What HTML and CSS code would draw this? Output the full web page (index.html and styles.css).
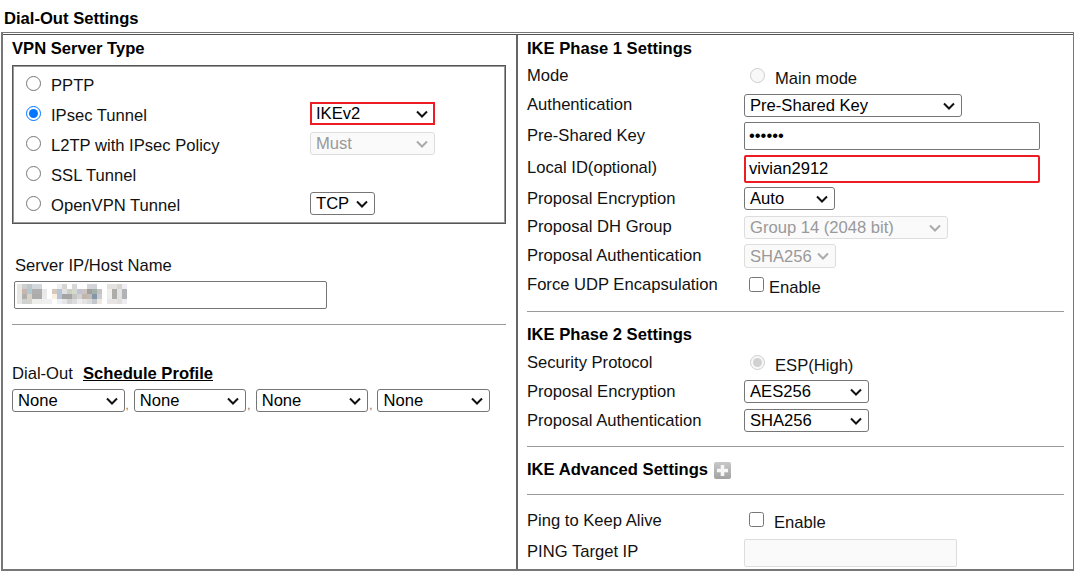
FILE: index.html
```html
<!DOCTYPE html>
<html lang="en">
<head>
<meta charset="utf-8">
<title>Dial-Out Settings</title>
<link rel="stylesheet" href="styles.css">
</head>
<body>
<h1 class="page-title">Dial-Out Settings</h1>
<div class="frame">
  <section class="panel left">
    <h2 class="section-title">VPN Server Type</h2>
    <div class="type-box">
      <label class="type-row"><input type="radio" name="type"><span>PPTP</span></label>
      <label class="type-row"><input type="radio" name="type" checked><span>IPsec Tunnel</span><select class="sel sel-ike flagged"><option>IKEv2</option></select></label>
      <label class="type-row"><input type="radio" name="type"><span>L2TP with IPsec Policy</span><select class="sel sel-ike" disabled><option>Must</option></select></label>
      <label class="type-row"><input type="radio" name="type"><span>SSL Tunnel</span></label>
      <label class="type-row"><input type="radio" name="type"><span>OpenVPN Tunnel</span><select class="sel sel-tcp"><option>TCP</option></select></label>
    </div>
    <div class="server">
      <div class="server-label">Server IP/Host Name</div>
      <div class="text-field server-field">
        <svg class="mosaic" width="110" height="20" viewBox="0 0 22 4" aria-hidden="true" shape-rendering="crispEdges">
          <rect x="0" y="0" width="1" height="4" fill="#e6e6e2"/>
          <rect x="1" y="0" width="1" height="1" fill="#cfcfcf"/><rect x="2" y="0" width="1" height="1" fill="#c0c6ca"/><rect x="3" y="0" width="2" height="1" fill="#d2d8dc"/>
          <rect x="1" y="1" width="1" height="1" fill="#c9b4ae"/><rect x="2" y="1" width="1" height="1" fill="#b0c8d0"/><rect x="3" y="1" width="2" height="1" fill="#aeaeae"/><rect x="5" y="1" width="1" height="1" fill="#e8e8e8"/>
          <rect x="1" y="2" width="1" height="1" fill="#b0b0ac"/><rect x="2" y="2" width="1" height="1" fill="#dad2c4"/><rect x="3" y="2" width="2" height="1" fill="#acacac"/><rect x="5" y="2" width="1" height="1" fill="#eaeaea"/>
          <rect x="1" y="3" width="1" height="1" fill="#d0d0ce"/><rect x="2" y="3" width="1" height="1" fill="#d2d2ce"/><rect x="3" y="3" width="2" height="1" fill="#eeeeea"/><rect x="5" y="3" width="2" height="1" fill="#f0f0f0"/>
          <rect x="7" y="1" width="1" height="1" fill="#d6c8ba"/><rect x="8" y="0" width="1" height="1" fill="#f0f0f4"/><rect x="9" y="0" width="1" height="1" fill="#d8d4d2"/><rect x="11" y="0" width="1" height="1" fill="#d8d8d8"/>
          <rect x="8" y="1" width="1" height="2" fill="#b6c2d6"/><rect x="9" y="1" width="1" height="1" fill="#e0e0e0"/><rect x="10" y="1" width="1" height="1" fill="#cecec4"/><rect x="11" y="1" width="1" height="1" fill="#d2dacc"/><rect x="12" y="1" width="1" height="1" fill="#c0c0d8"/><rect x="13" y="1" width="1" height="1" fill="#ccc4c0"/>
          <rect x="7" y="2" width="1" height="1" fill="#fbeee0"/><rect x="9" y="2" width="2" height="1" fill="#a4a4a4"/><rect x="11" y="2" width="1" height="1" fill="#c4c4c0"/><rect x="12" y="2" width="1" height="1" fill="#d2d2d2"/><rect x="13" y="2" width="1" height="1" fill="#c0b6ae"/>
          <rect x="8" y="3" width="1" height="1" fill="#eef0f6"/><rect x="9" y="3" width="1" height="1" fill="#e6e6e6"/><rect x="10" y="3" width="1" height="1" fill="#d2d2d2"/><rect x="11" y="3" width="1" height="1" fill="#dcdcdc"/><rect x="12" y="3" width="1" height="1" fill="#eeeeee"/><rect x="13" y="3" width="1" height="1" fill="#e4e4e4"/>
          <rect x="14" y="0" width="1" height="1" fill="#d6d6d6"/><rect x="15" y="0" width="1" height="1" fill="#d0d4d8"/>
          <rect x="14" y="1" width="1" height="1" fill="#a0a0a0"/><rect x="15" y="1" width="1" height="1" fill="#a2aeaa"/><rect x="16" y="1" width="1" height="1" fill="#c4c4c4"/>
          <rect x="14" y="2" width="1" height="1" fill="#c0bcb4"/><rect x="15" y="2" width="1" height="1" fill="#8496aa"/><rect x="16" y="2" width="1" height="1" fill="#cccccc"/>
          <rect x="14" y="3" width="1" height="1" fill="#dcdcdc"/><rect x="15" y="3" width="1" height="1" fill="#c4c8cc"/><rect x="16" y="3" width="1" height="1" fill="#f0e8e0"/>
          <rect x="18" y="0" width="2" height="1" fill="#e4e2de"/><rect x="20" y="0" width="1" height="1" fill="#d8d4d0"/><rect x="21" y="0" width="1" height="1" fill="#eeeef4"/>
          <rect x="18" y="1" width="1" height="2" fill="#eeeeea"/><rect x="19" y="1" width="1" height="2" fill="#acacA8"/><rect x="20" y="1" width="1" height="2" fill="#e2e2e2"/><rect x="21" y="1" width="1" height="2" fill="#b0b2b6"/>
          <rect x="18" y="3" width="2" height="1" fill="#e8e6e4"/><rect x="20" y="3" width="1" height="1" fill="#e2dedc"/><rect x="21" y="3" width="1" height="1" fill="#eeeef2"/>
        </svg>
      </div>
    </div>
    <hr class="rule">
    <div class="schedule-title">Dial-Out <a class="schedule-link" href="#">Schedule Profile</a></div>
    <div class="schedule-row">
      <select class="sel sel-none"><option>None</option></select><span class="comma">,</span>
      <select class="sel sel-none"><option>None</option></select><span class="comma">,</span>
      <select class="sel sel-none"><option>None</option></select><span class="comma">,</span>
      <select class="sel sel-none"><option>None</option></select>
    </div>
  </section>
  <section class="panel right">
    <h2 class="section-title">IKE Phase 1 Settings</h2>
    <div class="form phase1">
      <div class="label">Mode</div>
      <div class="control low"><input class="radio-gap" type="radio" disabled><span>Main mode</span></div>
      <div class="label raise">Authentication</div>
      <div class="control"><select class="sel sel-auth"><option>Pre-Shared Key</option></select></div>
      <div class="label">Pre-Shared Key</div>
      <div class="control"><div class="text-field key-field">••••••</div></div>
      <div class="label raise">Local ID(optional)</div>
      <div class="control"><div class="text-field key-field flagged">vivian2912</div></div>
      <div class="label">Proposal Encryption</div>
      <div class="control"><select class="sel sel-auto"><option>Auto</option></select></div>
      <div class="label raise">Proposal DH Group</div>
      <div class="control"><select class="sel sel-dh" disabled><option>Group 14 (2048 bit)</option></select></div>
      <div class="label">Proposal Authentication</div>
      <div class="control"><select class="sel sel-sha" disabled><option>SHA256</option></select></div>
      <div class="label">Force UDP Encapsulation</div>
      <div class="control low"><input class="check-gap" type="checkbox"><span>Enable</span></div>
    </div>
    <hr class="rule rule-p1">
    <h2 class="section-title title-p2">IKE Phase 2 Settings</h2>
    <div class="form phase2">
      <div class="label">Security Protocol</div>
      <div class="control low"><input class="radio-gap" type="radio" checked disabled><span>ESP(High)</span></div>
      <div class="label">Proposal Encryption</div>
      <div class="control"><select class="sel sel-p2"><option>AES256</option></select></div>
      <div class="label">Proposal Authentication</div>
      <div class="control"><select class="sel sel-p2"><option>SHA256</option></select></div>
    </div>
    <hr class="rule rule-p2">
    <h2 class="section-title title-adv">IKE Advanced Settings
      <svg class="plus" width="17" height="17" viewBox="0 0 17 17" aria-hidden="true">
        <defs>
          <linearGradient id="plusbg" x1="0" y1="0" x2="0" y2="1"><stop offset="0" stop-color="#c8c8c8"/><stop offset="1" stop-color="#a2a2a2"/></linearGradient>
          <filter id="plussoft" x="-20%" y="-20%" width="140%" height="140%"><feGaussianBlur stdDeviation="0.7"/></filter>
        </defs>
        <rect x="0" y="0" width="17" height="17" rx="2" fill="url(#plusbg)"/>
        <path d="M8.5 3v11M3 8.5h11" stroke="#f6f6f6" stroke-width="3.5" filter="url(#plussoft)"/>
      </svg>
    </h2>
    <hr class="rule rule-adv">
    <div class="form ping">
      <div class="label">Ping to Keep Alive</div>
      <div class="control low"><input class="check-gap wide" type="checkbox"><span>Enable</span></div>
      <div class="label raise">PING Target IP</div>
      <div class="control"><div class="text-field ping-field"></div></div>
    </div>
  </section>
</div>
</body>
</html>
```
FILE: styles.css
```css
* { box-sizing: border-box; }
html, body { margin: 0; padding: 0; height: 571px; overflow: hidden; background: #fff; }
body { font-family: "Liberation Sans", Arial, sans-serif; font-size: 16.6px; color: #111; }

.page-title { margin: 0; height: 32px; padding: 10px 0 0 4px; font-size: 16.6px; line-height: 17px; font-weight: bold; color: #000; }

.frame {
  height: 539px; margin-left: 1px;
  display: grid; grid-template-columns: 513px 1fr;
  border-top: 1px solid #777; border-left: 2px solid #777; border-right: 1px solid #777; border-bottom: 2px solid #777;
}
.panel { min-width: 0; margin-top: 1px; border-top: 1px solid #555; }
.left { padding-left: 9px; padding-right: 10px; }
.right { padding-left: 9px; padding-right: 9px; border-left: 2px solid #666; }

.section-title { margin: 0; font-size: 16.6px; line-height: 24px; height: 27px; padding-top: 2px; font-weight: bold; color: #000; }

.type-box {
  height: 159px; width: 494px; padding: 4px 0 0 13px; margin-top: 3px;
  border: 1px solid #555; outline: 1px solid #999; outline-offset: -2px;
}
.type-row { display: flex; align-items: center; height: 30px; }
.type-row input { margin: 0 10px 4px 0; width: 15px; height: 15px; flex: none; }
.type-row span { width: 259px; flex: none; padding-top: 2px; }

.sel {
  appearance: none; -webkit-appearance: none;
  font: 16.6px "Liberation Sans", Arial, sans-serif; height: 23px; padding: 0 0 0 5px;
  color: #000; border: 1px solid #767676; border-radius: 3px;
  background: #fff url("data:image/svg+xml,%3Csvg xmlns='http://www.w3.org/2000/svg' width='12' height='8'%3E%3Cpath d='M1 1.5l5 5 5-5' fill='none' stroke='%23111' stroke-width='2'/%3E%3C/svg%3E") no-repeat right 6px center;
}
.sel:disabled {
  color: #999; border-color: #ddd; opacity: 1;
  background: #fafafa url("data:image/svg+xml,%3Csvg xmlns='http://www.w3.org/2000/svg' width='12' height='8'%3E%3Cpath d='M1 1.5l5 5 5-5' fill='none' stroke='%23aaa' stroke-width='2'/%3E%3C/svg%3E") no-repeat right 6px center;
}
.flagged { border: 2px solid #ed1c24 !important; border-radius: 0; }
.sel.flagged { padding-left: 4px; background-position: right 5px center; }
.sel-ike { width: 125px; margin-top: -3px; }
.sel-tcp { width: 65px; margin-top: -3px; }

.server { padding: 32px 0 0 2px; }
.server-label { line-height: 20px; height: 25px; padding-left: 1px; }
.text-field {
  display: flex; align-items: center; height: 28px; background: #fff;
  border: 1px solid #767676; border-radius: 2px; padding-left: 4px;
}
.text-field.flagged { padding-left: 3px; }
.server-field { width: 313px; padding-left: 2px; }
.mosaic { display: block; margin-bottom: 3px; }

.rule { border: 0; border-top: 1px solid #999; margin: 15px 0 0; height: 0; }

.schedule-title { margin-top: 39px; line-height: 20px; height: 25px; }
.schedule-link { font-weight: bold; color: #000; text-decoration: underline; margin-left: 5.5px; }
.schedule-row { display: flex; align-items: flex-end; }
.sel-none { width: 112.5px; flex: none; }
.comma { width: 9.34px; flex: none; font-size: 11px; line-height: 14px; padding-left: 1px; color: #666; }

.form { display: grid; grid-template-columns: 217px 1fr; }
.phase1 { grid-template-rows: 28px 31px 30px 36px 23px 35px 22px 36px; }
.phase2 { grid-template-rows: 30px 27px 31px; }
.ping { grid-template-rows: 30px 33px; margin-top: 11px; }
.label { display: flex; align-items: center; line-height: 20px; }
.label.raise { padding-bottom: 2px; }
.control { display: flex; align-items: center; min-width: 0; }
.low span { padding-top: 6px; }
.ping .low { padding-bottom: 2px; }
.radio-gap { margin: 0 10px 2px 6px; width: 15px; height: 15px; }
.check-gap { margin: 0 5px 2px 5px; width: 15px; height: 15px; }
.check-gap.wide { margin-right: 10px; }

.sel-auth { width: 218px; }
.key-field { width: 296px; color: #000; }
.sel-auto { width: 91px; }
.sel-dh { width: 204px; }
.sel-sha { width: 92px; height: 24px; background-position: right 5px center; }
.sel-p2 { width: 125px; }
.ping-field { width: 213px; background: #fafafa; border-color: #ddd; }

.rule-p1 { margin-top: 8px; }
.title-p2 { margin-top: 9px; }
.rule-p2 { margin-top: 10px; }
.title-adv { height: 47px; display: flex; align-items: center; gap: 6px; padding: 0 0 2px; }
.plus { display: block; flex: none; margin-top: 2px; }
.rule-adv { margin-top: 0; }
```
